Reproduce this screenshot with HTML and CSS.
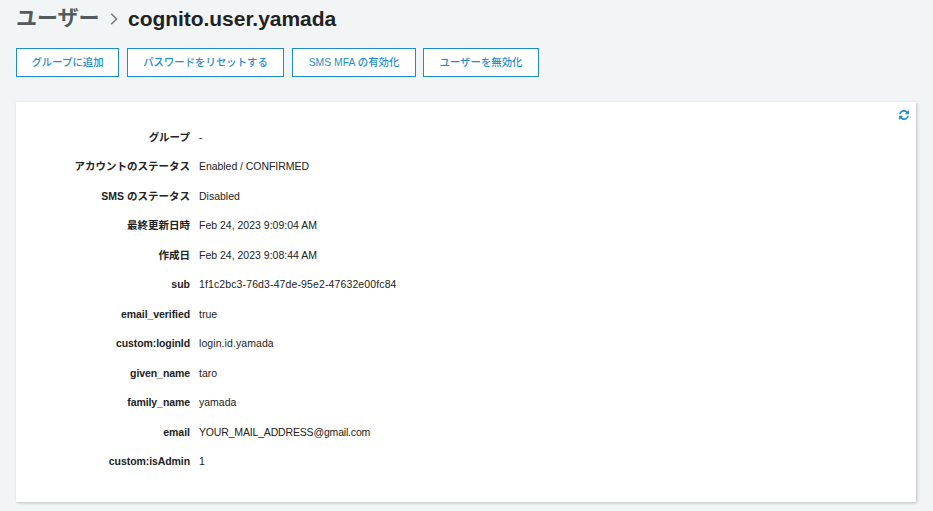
FILE: index.html
```html
<!DOCTYPE html>
<html lang="ja">
<head>
<meta charset="utf-8">
<title>cognito.user.yamada</title>
<link rel="stylesheet" href="styles.css">
</head>
<body>
<h1 class="crumbs">
  <span class="parent">ユーザー</span>
  <svg class="chevron" viewBox="0 0 8 12" width="8" height="12"><path d="M1.2 .8 6.6 6 1.2 11.2" fill="none" stroke="#777" stroke-width="1.5"/></svg>
  <span class="current">cognito.user.yamada</span>
</h1>
<div class="actions">
  <button class="btn add"><span>グループに追加</span></button>
  <button class="btn reset"><span>パスワードをリセットする</span></button>
  <button class="btn mfa"><span>SMS MFA の有効化</span></button>
  <button class="btn disable"><span>ユーザーを無効化</span></button>
</div>
<main class="card">
  <svg class="refresh" viewBox="0 0 1536 1536" width="10" height="10"><path fill="#1f8dcd" d="M1511 928q0 5-1 7-64 268-268 434.500T764 1536q-146 0-282.500-55T238 1324l-129 129q-19 19-45 19t-45-19-19-45V960q0-26 19-45t45-19h448q26 0 45 19t19 45-19 45l-137 137q71 66 161 102t187 36q134 0 250-65t186-179q11-17 53-117 8-23 30-23h192q13 0 22.500 9.500t9.500 22.500zm25-800v448q0 26-19 45t-45 19h-448q-26 0-45-19t-19-45 19-45l138-138Q969 256 768 256q-134 0-250 65T332 500q-11 17-53 117-8 23-30 23H50q-13 0-22.500-9.500T18 608v-7q65-268 270-434.500T768 0q146 0 284 55.500T1297 212l130-129q19-19 45-19t45 19 19 45z"/></svg>
  <dl class="details">
    <dt>グループ</dt><dd>-</dd>
    <dt>アカウントのステータス</dt><dd class="status">Enabled / CONFIRMED</dd>
    <dt>SMS のステータス</dt><dd>Disabled</dd>
    <dt>最終更新日時</dt><dd>Feb 24, 2023 9:09:04 AM</dd>
    <dt>作成日</dt><dd>Feb 24, 2023 9:08:44 AM</dd>
    <dt>sub</dt><dd class="uuid">1f1c2bc3-76d3-47de-95e2-47632e00fc84</dd>
    <dt class="key">email_verified</dt><dd>true</dd>
    <dt class="key">custom:loginId</dt><dd class="login">login.id.yamada</dd>
    <dt class="key">given_name</dt><dd>taro</dd>
    <dt class="key">family_name</dt><dd>yamada</dd>
    <dt>email</dt><dd class="address">YOUR_MAIL_ADDRESS@gmail.com</dd>
    <dt class="key">custom:isAdmin</dt><dd>1</dd>
  </dl>
</main>
</body>
</html>
```

FILE: styles.css
```css
* { box-sizing: border-box; }
body {
  margin: 0;
  padding: 4px 16px 0;
  height: 511px;
  overflow: hidden;
  background: #f2f5f6;
  color: #222;
  font-family: "Liberation Sans", "Noto Sans CJK JP", sans-serif;
}
.crumbs {
  display: flex;
  align-items: center;
  margin: 0;
  height: 30px;
  font-size: 21px;
  line-height: 30px;
  font-weight: 700;
  white-space: nowrap;
}
.parent { color: #545b5e; width: 84px; margin-top: -2px; }
.chevron { margin: 0 10px; }
.current { letter-spacing: -.04px; }
.actions { display: flex; gap: 8px; margin-top: 14px; }
.btn {
  height: 29px;
  padding: 0;
  border: 1px solid #1f8dcd;
  background: #fff;
  color: #1f8dcd;
  font: 500 10.4px/25px "Liberation Sans", "Noto Sans CJK JP", sans-serif;
  white-space: nowrap;
}
.add { width: 103px; }
.reset { width: 157px; }
.mfa { width: 124px; }
.disable { width: 116px; margin-left: -1px; }
.card {
  position: relative;
  margin-top: 25px;
  width: 900px;
  height: 400px;
  padding-top: 20.6px;
  background: #fff;
  box-shadow: 1px 1px 3px rgba(0, 0, 0, .22);
}
.refresh { position: absolute; top: 8px; right: 7px; }
.details {
  display: grid;
  grid-template-columns: 174px 1fr;
  column-gap: 9px;
  grid-auto-rows: 29.5px;
  margin: 0;
  font-size: 10.5px;
  line-height: 29.5px;
  white-space: nowrap;
}
dt { text-align: right; font-weight: 700; }
dd { margin: 0; }
.key { letter-spacing: -.08px; }
.status { letter-spacing: -.05px; }
.uuid { letter-spacing: .12px; }
.login { letter-spacing: .08px; }
.address { letter-spacing: -.17px; }
```
